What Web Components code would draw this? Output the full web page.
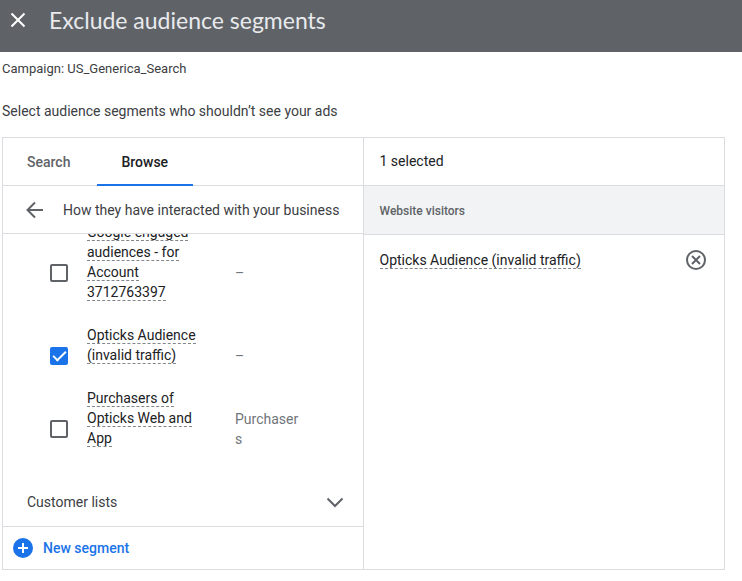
<!DOCTYPE html>
<html lang="en">
<head>
<meta charset="utf-8">
<meta name="viewport" content="width=device-width, initial-scale=1">
<title>Exclude audience segments</title>
<style>
    html, body { height: 100%; }
    body {
        margin: 0;
        background: #fff;
        color: #3c4043;
        font-family: Roboto, "Liberation Sans", sans-serif;
        font-size: 14px;
        line-height: 20px;
        --line: #dadce0;
        --blue: #1a73e8;
        --grey: #5f6368;
        --dark: #202124;
    }
</style>
</head>
<body>

<exclude-page></exclude-page>

<template id="tpl-header">
    <style>
        :host { display: flex; align-items: center; gap: 18px; min-height: 40px; padding: 0 5px 12px; background: var(--grey); color: #e8eaed; }
        button { display: flex; padding: 3px; border: 0; background: none; color: #fff; cursor: pointer; }
        h1 { margin: 0; font-family: Lato, Roboto, sans-serif; font-size: 23px; line-height: 28px; font-weight: 400; }
    </style>
    <button type="button" aria-label="Close">
        <svg width="20" height="20" viewBox="0 0 20 20" fill="none" stroke="currentColor" stroke-width="2"><path d="M3.5 3.5l13 13M16.5 3.5l-13 13"/></svg>
    </button>
    <h1><slot></slot></h1>
</template>

<template id="tpl-tabs">
    <style>
        :host { display: block; height: 47px; border-bottom: 1px solid var(--line); }
        div { display: flex; gap: 2px; }
        button { height: 48px; padding: 2px 25px 0 24px; border: 0; border-bottom: 2px solid transparent; background: none; color: var(--grey); font: inherit; font-weight: 500; cursor: pointer; }
        button[aria-selected="true"] { border-color: var(--blue); color: var(--dark); }
    </style>
    <div role="tablist">
        <button type="button" role="tab" aria-selected="false">Search</button>
        <button type="button" role="tab" aria-selected="true">Browse</button>
    </div>
</template>

<template id="tpl-row">
    <style>
        :host { display: grid; grid-template-columns: 18px 116px 64px; column-gap: 19px; align-items: center; padding-left: 47px; }
        input { appearance: none; display: grid; place-items: center; width: 18px; height: 18px; margin: 0; border: 2px solid var(--grey); border-radius: 2px; background: #fff; cursor: pointer; }
        input:checked { border-color: var(--blue); background: var(--blue); }
        input:checked::before { content: ""; width: 11px; height: 5px; border: solid #fff; border-width: 0 0 2px 2px; transform: translateY(-2px) rotate(-45deg); }
        label { padding-bottom: 22px; color: var(--dark); cursor: pointer; }
        label span { border-bottom: 1px dashed #80868b; }
        .note { padding-left: 13px; margin-right: -13px; color: #70757a; overflow-wrap: anywhere; }
    </style>
    <input type="checkbox" id="pick">
    <label for="pick"><span><slot></slot></span></label>
    <div class="note"><slot name="note">–</slot></div>
</template>

<template id="tpl-browse">
    <style>
        :host { display: flex; flex-direction: column; min-height: 0; border-right: 1px solid var(--line); }
        button { border: 0; background: none; color: inherit; font: inherit; cursor: pointer; }
        .path { display: flex; align-items: center; gap: 16px; height: 47px; padding-left: 20px; border-bottom: 1px solid var(--line); }
        .path button { display: flex; padding: 0; color: var(--grey); }
        .list { display: flex; flex: 1; flex-direction: column; justify-content: flex-end; gap: 1px; min-height: 0; overflow: hidden; }
        .list > * { flex-shrink: 0; }
        .group { display: flex; align-items: center; justify-content: space-between; height: 48px; margin-top: 7px; padding: 0 16px 0 24px; text-align: left; }
        .group svg { color: var(--grey); }
        .new { display: flex; align-items: center; gap: 8px; height: 43px; padding: 0 8px; border-top: 1px solid var(--line); color: var(--blue); font-weight: 500; }
    </style>
    <segment-tabs></segment-tabs>
    <div class="path">
        <button type="button" aria-label="Back">
            <svg width="24" height="24" viewBox="0 0 24 24" fill="none" stroke="currentColor" stroke-width="2"><path d="M20 12H5.5M12 4.5L4.5 12l7.5 7.5"/></svg>
        </button>
        <span>How they have interacted with your business</span>
    </div>
    <div class="list">
        <segment-row>Google engaged audiences - for Account 3712763397</segment-row>
        <segment-row checked>Opticks Audience (invalid traffic)</segment-row>
        <segment-row>Purchasers of Opticks Web and App<span slot="note">Purchasers</span></segment-row>
        <button type="button" class="group" aria-expanded="false">
            Customer lists
            <svg width="24" height="24" viewBox="0 0 24 24" fill="none" stroke="currentColor" stroke-width="2"><path d="M4.5 8.5L12 16l7.5-7.5"/></svg>
        </button>
    </div>
    <button type="button" class="new">
        <svg width="24" height="24" viewBox="0 0 24 24"><circle cx="12" cy="12" r="10" fill="currentColor"/><path d="M12 7v10M7 12h10" stroke="#fff" stroke-width="2"/></svg>
        New segment
    </button>
</template>

<template id="tpl-selected">
    <style>
        :host { display: block; color: var(--dark); }
        .count { height: 47px; padding: 0 16px; border-bottom: 1px solid var(--line); line-height: 47px; }
        h2 { margin: 0; height: 48px; padding: 0 16px; border-bottom: 1px solid var(--line); background: #f1f3f4; color: var(--grey); font-size: 12px; line-height: 50px; font-weight: 500; }
        .item { display: flex; align-items: center; justify-content: space-between; height: 50px; padding: 0 16px; }
        .item span { border-bottom: 1px dashed #80868b; line-height: 16px; }
        button { display: flex; padding: 0; border: 0; background: none; color: var(--grey); cursor: pointer; }
    </style>
    <div class="count">1 selected</div>
    <h2>Website visitors</h2>
    <div class="item">
        <span><slot></slot></span>
        <button type="button" aria-label="Remove">
            <svg width="24" height="24" viewBox="0 0 24 24" fill="none" stroke="currentColor" stroke-width="2"><circle cx="12" cy="12" r="9"/><path d="M8 8l8 8M16 8l-8 8"/></svg>
        </button>
    </div>
</template>

<template id="tpl-page">
    <style>
        :host { display: flex; flex-direction: column; height: 100%; }
        p { margin: 0; padding: 0 2px; }
        .campaign { padding-top: 7px; font-size: 13px; }
        .hint { padding-top: 22px; }
        .picker { display: grid; flex: 1; grid-template-columns: 1fr 1fr; grid-template-rows: minmax(0, 1fr); min-height: 0; margin: 16px 17px 11px 2px; border: 1px solid var(--line); }
    </style>
    <page-header>Exclude audience segments</page-header>
    <p class="campaign">Campaign: US_Generica_Search</p>
    <p class="hint">Select audience segments who shouldn’t see your ads</p>
    <div class="picker">
        <segment-browser></segment-browser>
        <selected-segments>Opticks Audience (invalid traffic)</selected-segments>
    </div>
</template>

<script>
    class BaseElement extends HTMLElement {
        constructor(tpl) {
            super();
            this.attachShadow({ mode: 'open' });
            this.shadowRoot.appendChild(document.getElementById(tpl).content.cloneNode(true));
        }
    }

    class PageHeader extends BaseElement {
        constructor() { super('tpl-header'); }
    }

    class SegmentTabs extends BaseElement {
        constructor() { super('tpl-tabs'); }

        connectedCallback() {
            const tabs = this.shadowRoot.querySelectorAll('button');
            tabs.forEach(tab => tab.addEventListener('click', () => {
                tabs.forEach(t => t.setAttribute('aria-selected', t === tab));
            }));
        }
    }

    class SegmentRow extends BaseElement {
        constructor() { super('tpl-row'); }

        connectedCallback() {
            this.shadowRoot.querySelector('input').checked = this.hasAttribute('checked');
        }
    }

    class SegmentBrowser extends BaseElement {
        constructor() { super('tpl-browse'); }
    }

    class SelectedSegments extends BaseElement {
        constructor() { super('tpl-selected'); }
    }

    class ExcludePage extends BaseElement {
        constructor() { super('tpl-page'); }
    }

    customElements.define('page-header', PageHeader);
    customElements.define('segment-tabs', SegmentTabs);
    customElements.define('segment-row', SegmentRow);
    customElements.define('segment-browser', SegmentBrowser);
    customElements.define('selected-segments', SelectedSegments);
    customElements.define('exclude-page', ExcludePage);
</script>
</body>
</html>
